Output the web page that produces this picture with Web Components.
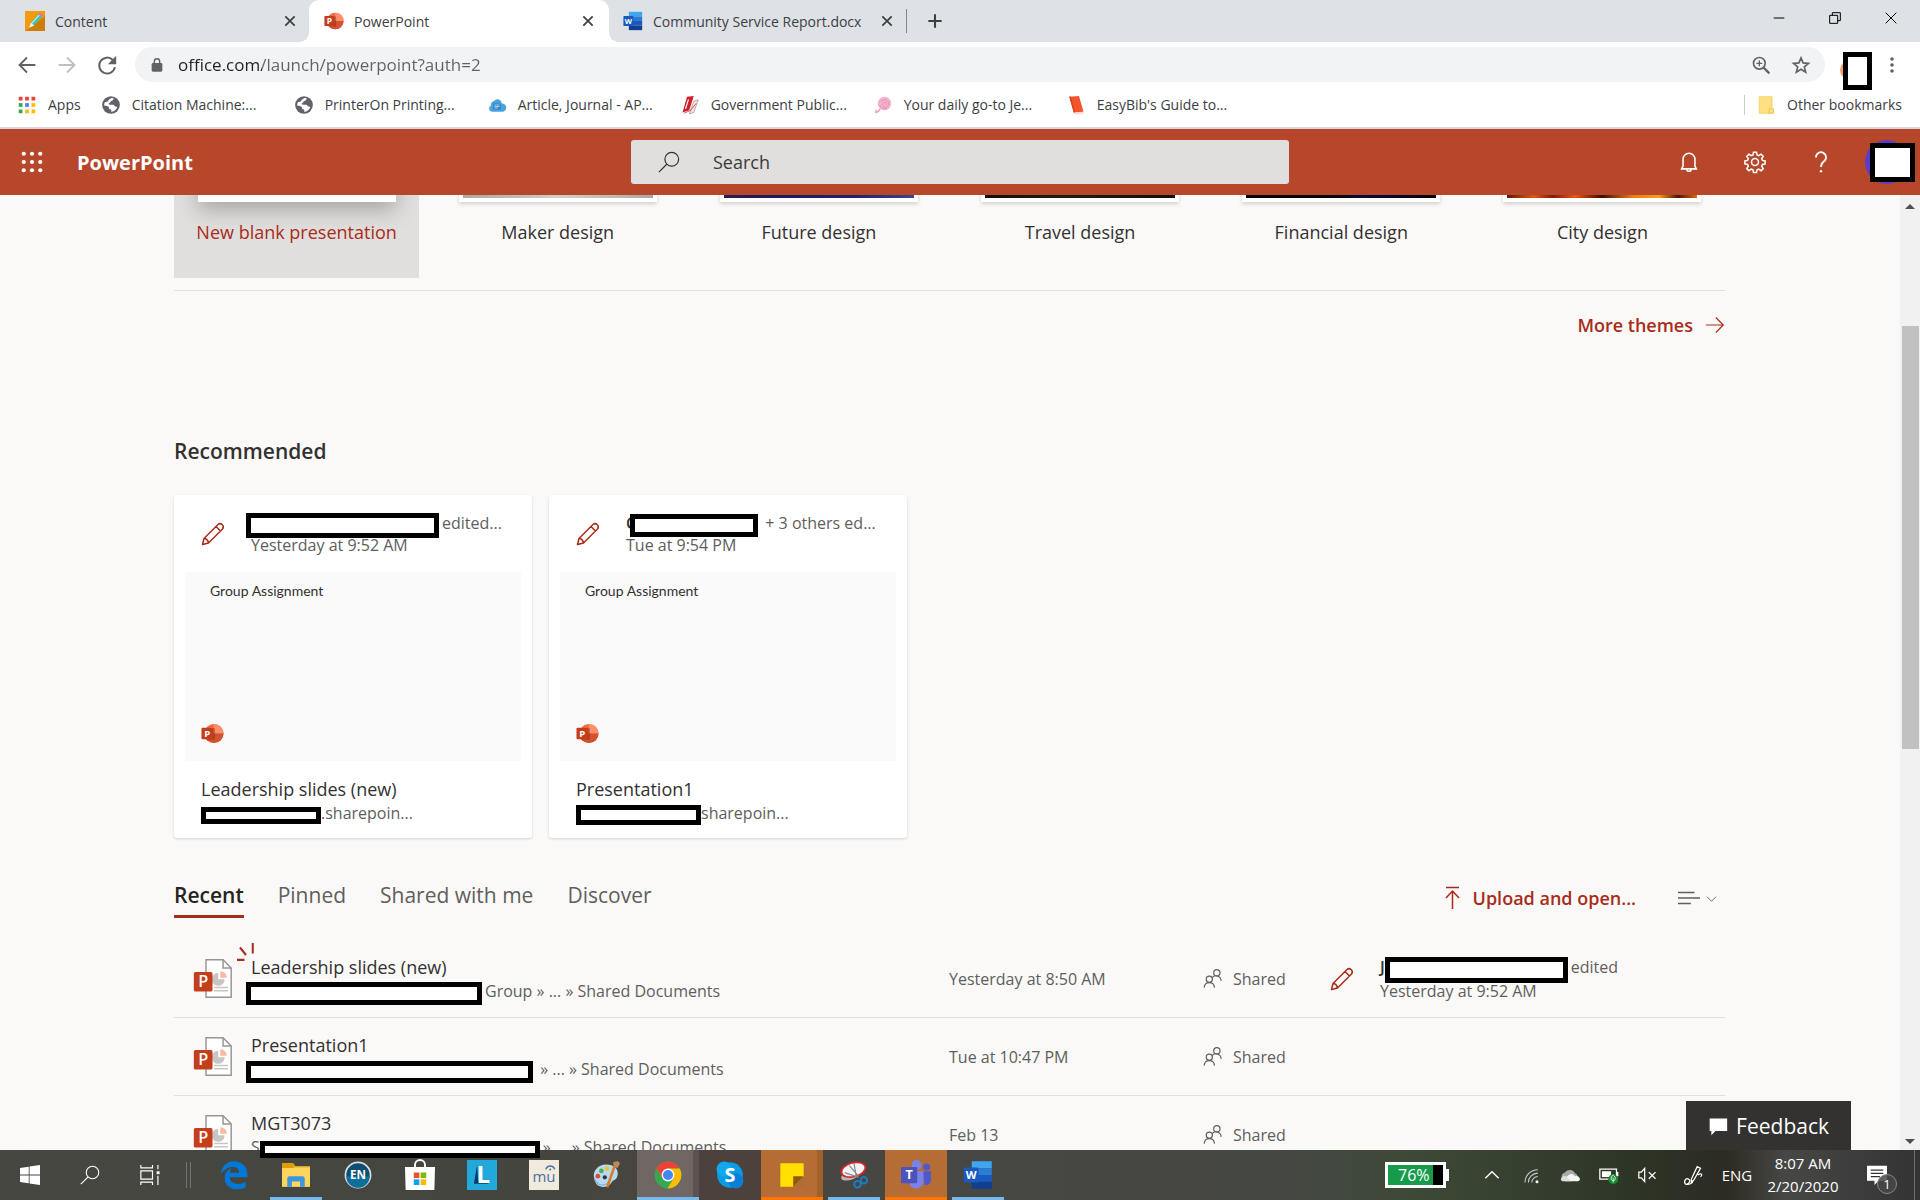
<!DOCTYPE html>
<html lang="en">
<head>
<meta charset="utf-8">
<title>PowerPoint</title>
<style>
  html, body { height: 100%; }
  body {
    margin: 0;
    overflow: hidden;
    font-family: "Open Sans", "Noto Sans", sans-serif;
    color: #323130;
    --brand: #b7472a;
    --accent: #a92b1a;
    --line: #e1dfdd;
    --muted: #605e5c;
    --page: #faf9f8;
  }
</style>
</head>
<body>
<app-window>
  <tab-strip slot="tabs">
    <browser-tab icon="pencil-app">Content</browser-tab>
    <browser-tab icon="powerpoint" active>PowerPoint</browser-tab>
    <browser-tab icon="word">Community Service Report.docx</browser-tab>
  </tab-strip>
  <address-bar slot="toolbar"></address-bar>
  <bookmark-bar slot="bookmarks">
    <bookmark-link icon="apps" compact>Apps</bookmark-link>
    <bookmark-link icon="globe">Citation Machine:...</bookmark-link>
    <bookmark-link icon="globe">PrinterOn Printing...</bookmark-link>
    <bookmark-link icon="cloud-blue">Article, Journal - AP...</bookmark-link>
    <bookmark-link icon="red-book">Government Public...</bookmark-link>
    <bookmark-link icon="rose">Your daily go-to Je...</bookmark-link>
    <bookmark-link icon="easybib">EasyBib's Guide to...</bookmark-link>
    <bookmark-link icon="folder-yellow" slot="other" compact>Other bookmarks</bookmark-link>
  </bookmark-bar>
  <suite-header slot="header">PowerPoint</suite-header>

  <theme-gallery slot="page">
    <theme-tile selected>New blank presentation</theme-tile>
    <theme-tile art="linear-gradient(90deg,#aaa9a5,#bfbdb8 30%,#d0cfcb 50%,#bcbab5 80%,#a9a8a4)">Maker design</theme-tile>
    <theme-tile art="linear-gradient(90deg,#2a1a55,#1c1c60 30%,#1f2468 70%,#39458c)">Future design</theme-tile>
    <theme-tile art="linear-gradient(90deg,#0c1209,#1a1e12 40%,#0d110a)">Travel design</theme-tile>
    <theme-tile art="linear-gradient(90deg,#030306 45%,#080b3c 60%,#06082c 80%,#030306)">Financial design</theme-tile>
    <theme-tile art="linear-gradient(90deg,#5a1c04,#e2580c 14%,#8a1804 24%,#f2540c 36%,#3a0c04 50%,#f07a10 66%,#ff9a1c 80%,#4a1602 90%,#e06a10)">City design</theme-tile>
  </theme-gallery>

  <recommended-list slot="page">
    <file-card heading="Leadership slides (new)">
      <activity-line slot="who"><cover-box w="193" h="25" lead></cover-box>edited...</activity-line>
      <span slot="when">Yesterday at 9:52 AM</span>
      <activity-line slot="where"><cover-box w="120" h="17"></cover-box>.sharepoin...</activity-line>
    </file-card>
    <file-card heading="Presentation1">
      <activity-line slot="who"><b>C</b><cover-box w="128" h="23" tuck></cover-box>&nbsp;+ 3 others ed...</activity-line>
      <span slot="when">Tue at 9:54 PM</span>
      <activity-line slot="where"><cover-box w="125" h="20"></cover-box>sharepoin...</activity-line>
    </file-card>
  </recommended-list>

  <recent-files slot="page"></recent-files>
  <page-scrollbar slot="scroll"></page-scrollbar>
  <feedback-button slot="feedback">Feedback</feedback-button>
  <task-bar slot="taskbar"></task-bar>
</app-window>

<script>
const PPT_MARK = `
  <circle cx="13.5" cy="12" r="10" fill="#ed6c47"/>
  <path d="M13.5 2a10 10 0 0 1 10 10h-10z" fill="#ff8f6b"/>
  <path d="M3.5 12h20a10 10 0 0 1-20 0z" fill="#d35230"/>
  <path d="M5 6.500h9.500v12H5z" fill="#7d2a14" opacity=".45"/>
  <rect x="0.500" y="6" width="12" height="12" rx="1" fill="#c43e1c"/>
  <text x="6.500" y="15.500" font-size="10" font-weight="700" text-anchor="middle" fill="#fff">P</text>`;

const WORD_MARK = `
  <path d="M7 1h16v5.500H7z" fill="#41a5ee"/><path d="M7 6.500h16V12H7z" fill="#2b7cd3"/>
  <path d="M7 12h16v5.500H7z" fill="#185abd"/><path d="M7 17.500h16V23H7z" fill="#103f91"/>
  <rect x="0.500" y="6" width="12" height="12" rx="1" fill="#185abd"/>
  <text x="6.500" y="15.500" font-size="9" font-weight="700" text-anchor="middle" fill="#fff">W</text>`;

// every glyph is drawn in a 24 x 24 box
const ICONS = {
  powerpoint: PPT_MARK,
  word: WORD_MARK,
  "pencil-app": `<path d="M0 0h24v24H0z" fill="#f39a0f"/><path d="M24 6v18H0l5-3z" fill="#cf7d06"/>
    <path d="M5 20l2-6L16.500 3.500l4 3.500L11 17.500z" fill="#3fc1b8"/><path d="M7.500 15.500L17 5" stroke="#b9f0ea" stroke-width="1.500"/>
    <path d="M16.500 3.500l4 3.500 1-2-3.500-3z" fill="#d472c4"/><path d="M5 20l2-6 4 3.500z" fill="#fff3da"/>`,
  close: `<path d="M4 4l16 16M20 4L4 20" stroke="currentColor" stroke-width="3" fill="none"/>`,
  plus: `<path d="M12 4v16M4 12h16" stroke="currentColor" stroke-width="2.500" fill="none"/>`,
  minimize: `<path d="M4 12h16" stroke="currentColor" stroke-width="1.500"/>`,
  restore: `<path d="M4 8h12v12H4zM8 8V4h12v12h-4" stroke="currentColor" stroke-width="1.500" fill="none"/>`,
  shut: `<path d="M4 4l16 16M20 4L4 20" stroke="currentColor" stroke-width="1.500"/>`,
  back: `<path d="M22 12H3M12 3l-9 9 9 9" stroke="currentColor" stroke-width="2.200" fill="none"/>`,
  forward: `<path d="M2 12h19M12 3l9 9-9 9" stroke="currentColor" stroke-width="2.200" fill="none"/>`,
  reload: `<path d="M19 6A9.500 9.500 0 1 0 21.500 14.500" stroke="currentColor" stroke-width="2.400" fill="none"/><path d="M23 1v10H13z" fill="currentColor"/>`,
  lock: `<rect x="4" y="9" width="16" height="13" rx="2" fill="currentColor"/><path d="M8 10V6.500a4 4 0 0 1 8 0V10" stroke="currentColor" stroke-width="2.200" fill="none"/>`,
  zoom: `<circle cx="10" cy="10" r="7" stroke="currentColor" stroke-width="2" fill="none"/><path d="M15 15l7 7" stroke="currentColor" stroke-width="2.800"/><path d="M10 6.500v7M6.500 10h7" stroke="currentColor" stroke-width="1.600"/>`,
  star: `<path d="M12 3.500l2.500 6 6.500.5-5 4.300 1.600 6.400L12 17.200l-5.600 3.500L8 14.300 3 10l6.500-.5z" stroke="currentColor" stroke-width="2" fill="none"/>`,
  kebab: `<circle cx="12" cy="4" r="2.400"/><circle cx="12" cy="12" r="2.400"/><circle cx="12" cy="20" r="2.400"/>`,
  apps: `<path d="M1 1h5v5H1zM9.500 1h5v5h-5zM18 1h5v5h-5z" fill="#ea4335"/><path d="M1 9.500h5v5H1z" fill="#34a853"/><path d="M9.500 9.500h5v5h-5z" fill="#4285f4"/><path d="M18 9.500h5v5h-5z" fill="#fbbc05"/><path d="M1 18h5v5H1z" fill="#34a853"/><path d="M9.500 18h5v5h-5zM18 18h5v5h-5z" fill="#fbbc05"/>`,
  globe: `<circle cx="12" cy="12" r="11.800" fill="#5f6368"/><path d="M15 2.800c1 2-.5 3.500-2.500 4-1.500.3-1 2-2.500 2.500-2 .7-1 2.200 1 2.200h4c2 0 1.500 2.500 3 2.500l2.500.5C19 18.500 16 21 12 21c1-1.500.5-3-1-3.200-2-.3-1.500-2-2-3.300-.5-1-4-1.500-6-1.500C2.500 7 7.500 2 15 2.800z" fill="#fff"/><path d="M3 8c2-4 6-6 9-5.500-1 2-3 1.500-3.500 3.500S6 8 3 8z" fill="#5f6368"/>`,
  "cloud-blue": `<path d="M5 21a4.500 4.500 0 0 1-1-8.500 5 5 0 0 1 4-6 6 6 0 0 1 10.500 3.500A5.500 5.500 0 0 1 19 21z" fill="#4ba3dc"/><path d="M7 10h10v8H7z" fill="#2d7fc0"/><path d="M8.500 12h7M8.500 14h7M8.500 16h5" stroke="#cfe8f8"/>`,
  "red-book": `<path d="M8 1l9-1-6 19-9 3z" fill="#cf1f2c"/><path d="M17 7l6-2-6 17-6 2z" fill="#efe7e4" stroke="#b78f8c"/><path d="M10 4.500L6 17" stroke="#fff" stroke-width="1.500"/><path d="M4 23l9-4 7-9" stroke="#c2303a" fill="none"/>`,
  rose: `<circle cx="14" cy="10" r="9" fill="#f3b4cd"/><path d="M9 8c2-4 8-4 10 0s-2 8-5 7-4-4-1-6 5 1 3 3M8 12c0 4 5 6 9 5" stroke="#e58fb3" fill="none" stroke-width="1.300"/><path d="M1 22c3 0 6-2 7-5" stroke="#ee9fbf" stroke-width="2" fill="none"/><circle cx="3" cy="20" r="2" fill="#f3b4cd"/>`,
  easybib: `<path d="M3 1l13-1 6 21-13 1z" fill="#f0552b"/><path d="M9 22l13-1v3l-12 .500z" fill="#ffd9cc"/><path d="M3 1l2-.200L11 22l-2 0z" fill="#d9431c"/>`,
  "folder-yellow": `<path d="M3 1h17v22H3z" fill="#ffe082" stroke="#f1cb56"/><path d="M16 17h6v6h-6z" fill="#ffe082" stroke="#e7b93b"/>`,
  waffle: `<g fill="currentColor"><circle cx="3" cy="3" r="2.300"/><circle cx="12" cy="3" r="2.300"/><circle cx="21" cy="3" r="2.300"/><circle cx="3" cy="12" r="2.300"/><circle cx="12" cy="12" r="2.300"/><circle cx="21" cy="12" r="2.300"/><circle cx="3" cy="21" r="2.300"/><circle cx="12" cy="21" r="2.300"/><circle cx="21" cy="21" r="2.300"/></g>`,
  search: `<circle cx="15" cy="9" r="7.500" stroke="currentColor" stroke-width="1.300" fill="none"/><path d="M9.500 14.500L1 23" stroke="currentColor" stroke-width="1.300"/>`,
  bell: `<path d="M4 19.500h16l-1.500-3V9a6.500 6.500 0 0 0-13 0v7.500zM9.500 19.500a2.500 2.500 0 0 0 5 0" stroke="currentColor" stroke-width="1.700" fill="none"/>`,
  gear: `<circle cx="12" cy="12" r="3.800" stroke="currentColor" stroke-width="1.700" fill="none"/><path d="M10.300 1.200h3.400l.6 3 1.900.8 2.600-1.700 2.400 2.400-1.700 2.600.8 1.900 3 .6v3.400l-3 .6-.8 1.900 1.700 2.600-2.400 2.400-2.600-1.700-1.900.8-.6 3h-3.400l-.6-3-1.900-.8-2.600 1.700-2.400-2.400 1.700-2.600-.8-1.900-3-.6v-3.400l3-.6.8-1.900-1.700-2.600 2.400-2.400 2.600 1.700 1.900-.8z" transform="translate(.3 .3) scale(.975)" stroke="currentColor" stroke-width="1.700" fill="none"/>`,
  help: `<path d="M6.500 7a5.500 5.500 0 1 1 8.500 4.500c-2 1.500-3 2.500-3 6" stroke="currentColor" stroke-width="1.900" fill="none"/><circle cx="12" cy="22" r="1.300" fill="currentColor"/>`,
  pencil: `<path d="M1.500 22.500L3 16.500 17 2.500a3.200 3.200 0 0 1 4.500 4.500L7.500 21zM3 16.500c2 0 4 2 4.500 4.500M15 4.500l4.500 4.500" stroke="currentColor" stroke-width="1.500" fill="none" stroke-linejoin="round"/>`,
  "arrow-right": `<path d="M1 12h21M13 3l9 9-9 9" stroke="currentColor" stroke-width="1.400" fill="none"/>`,
  upload: `<path d="M6 1.500h13M12.500 23V5.500M6 12l6.500-7L19 12" stroke="currentColor" stroke-width="1.500" fill="none"/>`,
  lines: `<path d="M0 6h18M0 12h24M0 18h14" stroke="currentColor" stroke-width="1.500"/>`,
  chevron: `<path d="M2 8l10 10L22 8" stroke="currentColor" stroke-width="2" fill="none"/>`,
  people: `<circle cx="17.500" cy="4.700" r="4"/><circle cx="8" cy="13" r="3.900"/><path d="M1.500 23.500c.5-8.500 12.500-8.500 13 0M11.500 11c3-4.500 11-2.500 11.500 4"/>`,
  file: `<path d="M8 .500h10.500l5 5V23.500H8z" fill="#fff" stroke="#979593" stroke-width=".9"/><path d="M18.500.500v5h5" fill="none" stroke="#979593" stroke-width=".9"/>
    <path d="M15.500 8.500v4h4a4 4 0 1 1-4-4z" fill="#c8c6c4"/><path d="M16.800 7.500a4 4 0 0 1 4 4h-4z" fill="#f8b9a2"/>
    <path d="M13 17.500h8.500M13 19.500h8.500" stroke="#c8c6c4"/>
    <rect x="0.500" y="8" width="11.500" height="12" rx="1" fill="#c43e1c"/>
    <text x="6.300" y="17.500" font-size="10" font-weight="600" text-anchor="middle" fill="#fff">P</text>`,
  spark: `<path d="M0 22.500h10M4 6l8 10M21 0v14" stroke="currentColor" stroke-width="2.700" fill="none"/>`,
  comment: `<path d="M2 3h21v15H9l-5 5v-5H2z" fill="currentColor"/>`,
  windows: `<path d="M0 3.500l10.500-1.500v9.500H0zM11.500 1.900L24 0v11.500H11.500zM0 12.500h10.500V22L0 20.500zM11.500 12.500H24V24l-12.500-1.900z" fill="currentColor"/>`,
  taskview: `<path d="M1 7h14v10H1zM1 0v3.500h14V0M1 24v-3.500h14V24M21.500 0v5M21.500 13v11" stroke="currentColor" stroke-width="1.400" fill="none"/><path d="M20 7.500h3.500V11H20z" fill="currentColor"/>`,
  edge: `<path d="M.500 11.200C1.500 4 6.500.200 12 .200c7 0 11.500 5 11.500 11.500V14H8.300c.5 6.500 8.500 7 13.700 3.800v5c-8 3.500-18 .7-18-8.300 0-4.500 2.500-7 6-8.500-1 1.200-1.500 2.500-1.700 4h8c0-7-10.500-6-15.800 1.200z" fill="#0078d7"/>`,
  explorer: `<path d="M0 2h9.500l2 2.500H24V22H0z" fill="#f8c33b"/><path d="M0 2h9.500l2 2.500L9.500 6H0z" fill="#e09d00"/><path d="M0 6h24v16H0z" fill="#ffd55e"/><path d="M4.500 22v-7a2 2 0 0 1 2-2h11a2 2 0 0 1 2 2v7h-4v-4.500h-7V22z" fill="#3c96dd"/>`,
  endnote: `<circle cx="12" cy="12" r="11.500" fill="#d8dde0"/><circle cx="12" cy="12" r="10" fill="#0f4e73"/><path d="M2 13a10 10 0 0 0 20 0z" fill="#0d6f9a"/><text x="12" y="15.300" font-size="10" font-weight="700" text-anchor="middle" fill="#fff">EN</text>`,
  store: `<path d="M8 6V4a4 4 0 0 1 8 0v2" stroke="#fff" stroke-width="1.500" fill="none"/><path d="M0 5.500h24L23.500 24H.500z" fill="#fff"/><path d="M7 10h4.500v4.500H7z" fill="#f25022"/><path d="M12.500 10H17v4.500h-4.500z" fill="#7fba00"/><path d="M7 15.500h4.500V20H7z" fill="#00a4ef"/><path d="M12.500 15.500H17V20h-4.500z" fill="#ffb900"/>`,
  lapp: `<path d="M0 0h24v24H0z" fill="#22a9dc"/><path d="M8 4L5.500 19H18l-9-2z" fill="#0b3a66"/><text x="13" y="18" font-size="19" font-weight="700" text-anchor="middle" fill="#fff">L</text>`,
  mendeley: `<path d="M0 0h24v24H0z" fill="#f1ebde"/><text x="12" y="17.500" font-size="12" text-anchor="middle" fill="#4a6fa5">mu</text><path d="M13.500 7.500c1-3.500 6-3.500 7 0" stroke="#4a6fa5" stroke-width="1.200" fill="none"/><circle cx="17" cy="7.500" r=".8" fill="#4a6fa5"/>`,
  paint: `<path d="M2 15C0 9 5 3 12 3s11 4 10 9-4 4-5 6-4 5-9 4-5-4-6-7z" fill="#b5d9ee"/><path d="M2 15c1 4 5 7 10 5l4-4" fill="none" stroke="#7fb3d3"/><circle cx="5" cy="13" r="2" fill="#e2473d"/><circle cx="8" cy="8.500" r="2" fill="#4bb04b"/><circle cx="13" cy="6.500" r="2" fill="#f0c43a"/><circle cx="11" cy="14" r="1.800" fill="#2f3136"/><path d="M21 3l-7 20-2-1L19 2z" fill="#d9792b"/><path d="M18 1l4-1 2 2-2 4-3-1z" fill="#b98a55"/>`,
  chrome: `<circle cx="12" cy="12" r="11.500" fill="#34a853"/><path d="M2 6.200A11.500 11.500 0 0 1 22 6.500H12L7.200 14.800z" fill="#ea4335"/><path d="M22 6.500A11.500 11.500 0 0 1 11.500 23.500L16.800 14.800 12 6.500z" fill="#fbbc05" /><circle cx="12" cy="12" r="5.500" fill="#fff"/><circle cx="12" cy="12" r="4.300" fill="#4285f4"/>`,
  skype: `<circle cx="12" cy="12" r="11" fill="#0a9be6"/><circle cx="7" cy="7" r="6.500" fill="#10a8ee"/><circle cx="17" cy="17" r="6.500" fill="#0b7fd6"/><text x="12" y="18" font-size="17" font-weight="700" text-anchor="middle" fill="#fff">S</text>`,
  sticky: `<path d="M2 2h20v11l-9 9H2z" fill="#ffe000"/><path d="M22 13v9h-9z" fill="#b36b35"/><path d="M13 22v-9h9z" fill="#8d5a12"/>`,
  snip: `<ellipse cx="9" cy="12" rx="8.500" ry="4" transform="rotate(-20 9 12)" fill="#b6babd"/><ellipse cx="11.500" cy="7.500" rx="10.500" ry="6" transform="rotate(-15 11.500 7.500)" fill="#f4f4f4" stroke="#d8262c" stroke-width="1.500"/><path d="M12 2l2 12M4 10l12 4M8 4l8 9" stroke="#85898c"/><circle cx="15" cy="20" r="2.800" fill="none" stroke="#1d7bc0" stroke-width="1.700"/><circle cx="20.500" cy="16.500" r="2.800" fill="none" stroke="#1d7bc0" stroke-width="1.700"/>`,
  teams: `<circle cx="20.500" cy="5.500" r="2.800" fill="#5059c9"/><path d="M17 9h7v7a4 4 0 0 1-5 4z" fill="#5059c9"/><circle cx="12.500" cy="4" r="4" fill="#7b83eb"/><path d="M7 9h11v8a6 6 0 0 1-11 3z" fill="#7b83eb"/><rect y="5.500" width="13" height="13" rx="1" fill="#4b53bc"/><text x="6.500" y="15.500" font-size="10" font-weight="700" text-anchor="middle" fill="#fff">T</text>`,
  up: `<path d="M2 17L12 7l10 10" stroke="currentColor" stroke-width="2" fill="none"/>`,
  wifi: `<g fill="none" stroke="currentColor" stroke-width="1.400"><path d="M13 22a8 8 0 0 1 8-8M8.500 22A12.500 12.500 0 0 1 21 9.500M4 22A17 17 0 0 1 21 5" opacity=".75"/></g><circle cx="20" cy="21" r="2" fill="currentColor"/>`,
  onedrive: `<path d="M4 18a5 5 0 0 1 2-9 7 7 0 0 1 12 1 5 5 0 0 1 2 8z" fill="#a9aba6"/><path d="M6 19.500a4 4 0 0 1 3-6c3-4 7-3 9 0 4-1 6 2 6 4a3 3 0 0 1-3 2z" fill="#f5f5f5"/><path d="M1 18c0-3 2-5 5-5l8 6.500H3z" fill="#dededc"/>`,
  charge: `<path d="M1 5h20v12H1zM22.500 8.500v5" fill="none" stroke="currentColor" stroke-width="1.500"/><path d="M3.500 7.500h11v7h-11z" fill="currentColor"/><circle cx="17" cy="17" r="6" fill="#128a2d"/><path d="M17 21v-6M14.500 16.500c0-3 2.500-4.500 2.500-4.500s2.500 1.500 2.500 4.500-5 3-5 0z" stroke="#fff" fill="none"/>`,
  mute: `<path d="M1 8.500h3L8 4v16l-4-4.500H1zM13 8.500l8 8M21 8.500l-8 8" stroke="currentColor" stroke-width="1.500" fill="none"/>`,
  pen: `<path d="M10 17L17 2l4 2-8 14-3 2zM3 23c-3-4 1-8 4-6s-1 7-4 6c4 1 9-1 9-4M18 12c4-3 6 0 3 2" stroke="currentColor" stroke-width="1.500" fill="none"/>`,
  notice: `<path d="M0 1h24v18h-10l-5 5v-5H0z" fill="currentColor"/><path d="M4.500 6h15M4.500 10h15M4.500 14h11" stroke="#333" stroke-width="1.500"/>`,
};

class UiIcon extends HTMLElement {
  constructor() {
    super();
    this.attachShadow({ mode: "open" });
  }

  connectedCallback() {
    const size = this.getAttribute("size") || "20";
    this.shadowRoot.innerHTML = `
      <style>
        :host { display: inline-flex; flex: none; width: ${size}px; height: ${size}px; }
        svg { width: 100%; height: 100%; overflow: visible; font-family: "Open Sans", sans-serif; }
        .people { fill: none; stroke: currentColor; stroke-width: 1.5px; }
      </style>
      <svg viewBox="0 0 24 24" fill="currentColor" class="${this.getAttribute("name")}" aria-hidden="true">${ICONS[this.getAttribute("name")]}</svg>
    `;
  }
}
customElements.define("ui-icon", UiIcon);

// Base for the parts whose markup never changes
class StaticPart extends HTMLElement {
  constructor() {
    super();
    this.attachShadow({ mode: "open" });
  }

  connectedCallback() {
    this.shadowRoot.innerHTML = `
      <style>
        *, *::before { box-sizing: border-box; }
        button { font: inherit; color: inherit; background: none; border: 0; padding: 0; margin: 0; cursor: pointer; }
        a { color: inherit; text-decoration: none; }
        ${this.styles()}
      </style>
      ${this.markup()}
    `;
  }
}

class AppWindow extends StaticPart {
  styles() {
    return `
      :host { display: flex; flex-direction: column; height: 100vh; background: var(--page); }
      .chrome, .head, .bottom { position: relative; z-index: 1; flex: none; }
      .chrome { z-index: 2; }
      .body { flex: 1; min-height: 0; display: flex; }
      main { flex: 1; min-width: 0; padding: 0 175px 0 174px; background: var(--page); }
      .bar { flex: none; display: flex; }
      .float { position: absolute; right: 69px; bottom: 100%; }
    `;
  }
  markup() {
    return `
      <div class="chrome"><slot name="tabs"></slot><slot name="toolbar"></slot><slot name="bookmarks"></slot></div>
      <div class="head"><slot name="header"></slot></div>
      <div class="body"><main><slot name="page"></slot></main><div class="bar"><slot name="scroll"></slot></div></div>
      <div class="bottom"><div class="float"><slot name="feedback"></slot></div><slot name="taskbar"></slot></div>
    `;
  }
}
customElements.define("app-window", AppWindow);

class TabStrip extends StaticPart {
  styles() {
    return `
      :host { display: flex; align-items: center; height: 42px; background: #dee1e6; color: #3c4043; }
      .add { display: flex; margin-left: 18px; }
      .controls { display: flex; gap: 40px; margin-left: auto; padding: 0 21px 6px 0; color: #000; }
      .controls button { display: flex; }
    `;
  }
  markup() {
    return `
      <slot></slot>
      <button class="add" aria-label="New tab"><ui-icon name="plus" size="20"></ui-icon></button>
      <div class="controls">
        <button aria-label="Minimize"><ui-icon name="minimize" size="16"></ui-icon></button>
        <button aria-label="Restore"><ui-icon name="restore" size="16"></ui-icon></button>
        <button aria-label="Close"><ui-icon name="shut" size="16"></ui-icon></button>
      </div>
    `;
  }
}
customElements.define("tab-strip", TabStrip);

class BrowserTab extends StaticPart {
  styles() {
    return `
      :host { display: flex; align-items: center; gap: 10px; width: 300px; height: 42px; box-sizing: border-box; padding: 0 14px 0 15px; font-size: 14px; }
      :host(:first-child) { width: 309px; padding: 0 12px 0 25px; }
      :host(:nth-child(3)) { width: 298px; background: linear-gradient(#80868b, #80868b) right center / 1px 24px no-repeat; padding-right: 13px; padding-left: 14px; }
      :host([active]) {
        position: relative; background: #fff; border-radius: 10px 10px 0 0;
      }
      /* the active tab flares out at its foot */
      :host([active])::before, :host([active])::after {
        content: ""; position: absolute; bottom: 0; width: 10px; height: 10px;
      }
      :host([active])::before { right: 100%; background: radial-gradient(circle at 0 0, transparent 10px, #fff 10px); }
      :host([active])::after { left: 100%; background: radial-gradient(circle at 100% 0, transparent 10px, #fff 10px); }
      .label { flex: 1; white-space: nowrap; }
      button { display: flex; }
    `;
  }
  markup() {
    return `
      <ui-icon name="${this.getAttribute("icon")}" size="20"></ui-icon>
      <span class="label"><slot></slot></span>
      <button aria-label="Close tab"><ui-icon name="close" size="14"></ui-icon></button>
    `;
  }
}
customElements.define("browser-tab", BrowserTab);

class AddressBar extends StaticPart {
  styles() {
    return `
      :host { display: flex; align-items: center; height: 45px; background: #fff; color: #5f6368; padding: 0 19px 0 17px; }
      button { display: flex; }
      .nav { display: flex; gap: 20px; padding-right: 18px; }
      .off { color: #bdc1c6; }
      .omni { flex: 1; display: flex; align-items: center; height: 35px; border-radius: 18px; background: #f1f3f4; padding: 0 14px; }
      .omni button { margin-left: 20px; }
      input {
        flex: 1; border: 0; outline: 0; margin: 0 0 0 13px; padding: 0; font: 17px/24px "Open Sans", sans-serif;
        color: transparent; background: linear-gradient(90deg, #202124 84px, #5f6368 84px);
        -webkit-background-clip: text; background-clip: text;
      }
      .user { position: relative; top: 6px; margin: 0 11px 0 18px; width: 29px; height: 38px; }
      .user::before { content: ""; position: absolute; left: -3px; top: 8px; width: 20px; height: 20px; border-radius: 50%; background: #f3a06c; }
    `;
  }
  markup() {
    return `
      <div class="nav">
        <button aria-label="Back"><ui-icon name="back"></ui-icon></button>
        <button aria-label="Forward" class="off"><ui-icon name="forward"></ui-icon></button>
        <button aria-label="Reload"><ui-icon name="reload"></ui-icon></button>
      </div>
      <div class="omni">
        <ui-icon name="lock" size="16"></ui-icon>
        <input type="text" value="office.com/launch/powerpoint?auth=2" aria-label="Address">
        <button aria-label="Zoom"><ui-icon name="zoom"></ui-icon></button>
        <button aria-label="Bookmark this page"><ui-icon name="star"></ui-icon></button>
      </div>
      <div class="user"><cover-box w="29" h="38"></cover-box></div>
      <button aria-label="Menu"><ui-icon name="kebab" size="18"></ui-icon></button>
    `;
  }
}
customElements.define("address-bar", AddressBar);

class BookmarkBar extends StaticPart {
  styles() {
    return `
      :host { display: flex; align-items: center; height: 42px; box-sizing: border-box; padding: 0 18px 4px; background: #fff; border-bottom: 2px solid #d5d8dc; color: #3c4043; }
      nav { display: flex; flex: 1; }
      .other { border-left: 1px solid #c8cbcf; padding-left: 12px; }
    `;
  }
  markup() {
    return `<nav><slot></slot></nav><div class="other"><slot name="other"></slot></div>`;
  }
}
customElements.define("bookmark-bar", BookmarkBar);

class BookmarkLink extends StaticPart {
  styles() {
    return `
      :host { display: block; width: 193px; font-size: 14px; line-height: 20px; }
      :host([compact]) { width: auto; margin-right: 21px; }
      :host([slot="other"]) { margin-right: 0; }
      a { display: flex; align-items: center; gap: 12px; white-space: nowrap; }
    `;
  }
  markup() {
    return `<a href="#"><ui-icon name="${this.getAttribute("icon")}" size="18"></ui-icon><slot></slot></a>`;
  }
}
customElements.define("bookmark-link", BookmarkLink);

class SuiteHeader extends StaticPart {
  styles() {
    return `
      :host { display: grid; grid-template-columns: 1fr minmax(320px, 658px) 1fr; align-items: center; height: 66px; background: var(--brand); color: #fff; }
      .left { display: flex; align-items: center; gap: 34px; padding-left: 21px; font-size: 20px; font-weight: 700; }
      button { display: flex; }
      label { display: flex; align-items: center; gap: 33px; height: 44px; padding: 0 27px; border-radius: 3px; background: #e1dfdd; color: #323130; }
      input { flex: 1; min-width: 0; border: 0; outline: 0; padding: 0; background: none; font: 18px/24px "Open Sans", sans-serif; color: #323130; }
      input::placeholder { color: #3b3a39; opacity: 1; }
      .right { display: flex; align-items: center; justify-content: flex-end; gap: 44px; padding-right: 5px; }
      .me { position: relative; width: 45px; height: 44px; display: flex; align-items: center; margin-left: -6px; }
      .me::before { content: ""; position: absolute; left: -5px; width: 44px; height: 44px; border-radius: 50%; background: #5b3cc4; }
    `;
  }
  markup() {
    return `
      <div class="left">
        <button aria-label="App launcher"><ui-icon name="waffle" size="22"></ui-icon></button>
        <slot></slot>
      </div>
      <label><ui-icon name="search" size="22"></ui-icon><input type="search" placeholder="Search" aria-label="Search"></label>
      <div class="right">
        <button aria-label="Notifications"><ui-icon name="bell" size="22"></ui-icon></button>
        <button aria-label="Settings"><ui-icon name="gear" size="22"></ui-icon></button>
        <button aria-label="Help"><ui-icon name="help" size="22"></ui-icon></button>
        <div class="me"><cover-box w="45" h="39"></cover-box></div>
      </div>
    `;
  }
}
customElements.define("suite-header", SuiteHeader);

// White box with a heavy frame that hides a name
class CoverBox extends StaticPart {
  styles() {
    return `
      :host {
        display: inline-block; position: relative; z-index: 2; flex: none; box-sizing: border-box;
        width: ${this.getAttribute("w")}px; height: ${this.getAttribute("h")}px;
        background: #fff; border: 5px solid #000;
      }
      :host([lead]) { margin-left: -5px; }
      :host([tuck]) { margin-left: -6px; }
    `;
  }
  markup() {
    return "";
  }
}
customElements.define("cover-box", CoverBox);

class ActivityLine extends StaticPart {
  styles() {
    return `
      :host { display: flex; align-items: center; height: 24px; white-space: nowrap; }
      :host([slot]) { height: 22px; }
      ::slotted(b) { font-weight: 600; color: #323130; }
      ::slotted(cover-box) { margin-right: 3px; top: 3px; }
      :host([slot]) ::slotted(cover-box) { top: 2px; }
      :host([slot="where"]) ::slotted(cover-box) { margin-right: 0; }
    `;
  }
  markup() {
    return `<slot></slot>`;
  }
}
customElements.define("activity-line", ActivityLine);

class ThemeGallery extends StaticPart {
  styles() {
    return `
      :host { display: block; margin-top: -104px; }
      .tiles { display: grid; grid-template-columns: repeat(6, 1fr); gap: 16px; padding-bottom: 12px; border-bottom: 1px solid var(--line); }
      .more { display: flex; justify-content: flex-end; margin-top: 21px; font-size: 18px; line-height: 26px; font-weight: 600; color: var(--accent); }
      a { display: flex; align-items: center; gap: 12px; }
    `;
  }
  markup() {
    return `
      <div class="tiles"><slot></slot></div>
      <div class="more"><a href="#">More themes <ui-icon name="arrow-right"></ui-icon></a></div>
    `;
  }
}
customElements.define("theme-gallery", ThemeGallery);

class ThemeTile extends StaticPart {
  styles() {
    return `
      :host { display: block; font-size: 18px; line-height: 26px; }
      :host([selected]) { background: var(--line); color: var(--accent); }
      a { display: flex; flex-direction: column; align-items: center; gap: 17px; padding-bottom: 33px; white-space: nowrap; }
      .art { width: 198px; height: 111px; background: ${this.getAttribute("art") || "#fff"}; border: 4px solid #fff; box-shadow: 0 2px 4px rgba(0, 0, 0, .16); }
      :host([selected]) .art { box-shadow: 0 8px 20px rgba(0, 0, 0, .25); }
    `;
  }
  markup() {
    return `<a href="#"><span class="art"></span><slot></slot></a>`;
  }
}
customElements.define("theme-tile", ThemeTile);

class RecommendedList extends StaticPart {
  styles() {
    return `
      :host { display: block; margin-top: 97px; }
      h2 { margin: 0 0 28px; font-size: 21px; line-height: 32px; font-weight: 600; }
      .cards { display: flex; gap: 17px; }
    `;
  }
  markup() {
    return `<h2>Recommended</h2><div class="cards"><slot></slot></div>`;
  }
}
customElements.define("recommended-list", RecommendedList);

class FileCard extends StaticPart {
  styles() {
    return `
      :host { display: block; width: 358px; box-sizing: border-box; padding: 17px 11px 14px; background: #fff; border-radius: 3px; box-shadow: 0 1px 3px rgba(0, 0, 0, .16); font-size: 16px; line-height: 22px; color: var(--muted); }
      .top { display: flex; align-items: center; gap: 26px; padding-left: 16px; }
      .top > ui-icon { color: var(--accent); }
      .top > div { height: 44px; }
      .preview { display: flex; flex-direction: column; justify-content: space-between; align-items: flex-start; height: 189px; margin-top: 16px; padding: 8px 16px 16px; background: #fafafa; color: #323130; }
      .preview span { padding-left: 9px; font: 14px/22px Lato, sans-serif; }
      .info { padding: 16px 16px 0; }
      a { display: block; font-size: 18px; line-height: 25px; color: #323130; }
    `;
  }
  markup() {
    return `
      <div class="top">
        <ui-icon name="pencil" size="24"></ui-icon>
        <div><slot name="who"></slot><slot name="when"></slot></div>
      </div>
      <div class="preview"><span>Group Assignment</span><ui-icon name="powerpoint" size="23"></ui-icon></div>
      <div class="info"><a href="#">${this.getAttribute("heading")}</a><slot name="where"></slot></div>
    `;
  }
}
customElements.define("file-card", FileCard);

const FILES = [
  {
    name: "Leadership slides (new)",
    fresh: true,
    path: `<cover-box w="236" h="23" lead></cover-box>Group » ... » Shared Documents`,
    date: "Yesterday at 8:50 AM",
    who: `<b>J</b><cover-box w="183" h="26"></cover-box>edited`,
    when: "Yesterday at 9:52 AM",
  },
  {
    name: "Presentation1",
    path: `<cover-box w="287" h="22" lead></cover-box>&nbsp;» ... » Shared Documents`,
    date: "Tue at 10:47 PM",
  },
  {
    name: "MGT3073",
    path: `S<cover-box w="280" h="17"></cover-box>» ... » Shared Documents`,
    date: "Feb 13",
  },
];

class RecentFiles extends StaticPart {
  styles() {
    return `
      :host { display: block; margin-top: 41px; font-size: 16px; line-height: 24px; color: var(--muted); }
      .bar { display: flex; align-items: flex-start; }
      .tabs { display: flex; flex: 1; gap: 34px; font-size: 21px; line-height: 32px; }
      .tabs button { padding-bottom: 4px; border-bottom: 3px solid transparent; }
      .tabs [aria-selected=true] { color: #252423; font-weight: 600; border-color: var(--accent); }
      .upload { display: flex; align-items: center; gap: 9px; height: 38px; font-size: 18px; font-weight: 600; color: var(--accent); }
      .view { display: flex; align-items: center; gap: 6px; height: 38px; margin: 0 8px 0 42px; color: #605e5c; }
      table { width: 100%; margin-top: 22px; border-collapse: separate; border-spacing: 0; table-layout: fixed; }
      td { height: 78px; padding: 0; border-bottom: 1px solid var(--line); vertical-align: middle; }
      .c-icon { width: 77px; } .c-date { width: 254px; } .c-share { width: 127px; } .c-act { width: 50px; } .c-who { width: 345px; }
      td:first-child { padding-left: 19px; }
      td ui-icon { vertical-align: middle; }
      .title { position: relative; font-size: 18px; color: #323130; }
      .title ui-icon { position: absolute; left: -14px; top: -12px; color: var(--accent); }
      .share { display: flex; align-items: center; gap: 11px; }
      .edit { color: var(--accent); }
    `;
  }
  row(file) {
    return `
      <tr>
        <td><ui-icon name="file" size="39"></ui-icon></td>
        <td>
          <div class="title">${file.fresh ? `<ui-icon name="spark" size="18"></ui-icon>` : ""}<a href="#">${file.name}</a></div>
          <activity-line>${file.path}</activity-line>
        </td>
        <td>${file.date}</td>
        <td><div class="share"><ui-icon name="people" size="19"></ui-icon>Shared</div></td>
        <td class="edit">${file.who ? `<ui-icon name="pencil" size="24"></ui-icon>` : ""}</td>
        <td>${file.who ? `<activity-line>${file.who}</activity-line><div>${file.when}</div>` : ""}</td>
      </tr>
    `;
  }
  markup() {
    return `
      <div class="bar">
        <div class="tabs" role="tablist">
          <button role="tab" aria-selected="true">Recent</button>
          <button role="tab" aria-selected="false">Pinned</button>
          <button role="tab" aria-selected="false">Shared with me</button>
          <button role="tab" aria-selected="false">Discover</button>
        </div>
        <button class="upload"><ui-icon name="upload" size="24"></ui-icon>Upload and open...</button>
        <button class="view" aria-label="View options"><ui-icon name="lines" size="22"></ui-icon><ui-icon name="chevron" size="11"></ui-icon></button>
      </div>
      <table aria-label="Recent files">
        <colgroup><col class="c-icon"><col><col class="c-date"><col class="c-share"><col class="c-act"><col class="c-who"></colgroup>
        <tbody>${FILES.map((file) => this.row(file)).join("")}</tbody>
      </table>
    `;
  }
}
customElements.define("recent-files", RecentFiles);

class PageScrollbar extends StaticPart {
  styles() {
    return `
      :host { display: flex; flex-direction: column; align-items: center; width: 20px; box-sizing: border-box; padding: 9px 0 6px; background: #f1f1f1; }
      .up, .down { border: 5px solid transparent; }
      .up { border-top: 0; border-bottom-color: #505050; }
      .down { border-bottom: 0; border-top-color: #505050; }
      .track { flex: 1; display: flex; flex-direction: column; align-items: stretch; width: 17px; padding-top: 117px; }
      .thumb { height: 52%; min-height: 40px; background: #c1c1c1; }
    `;
  }
  markup() {
    return `<span class="up"></span><div class="track"><div class="thumb"></div></div><span class="down"></span>`;
  }
}
customElements.define("page-scrollbar", PageScrollbar);

class FeedbackButton extends StaticPart {
  styles() {
    return `
      :host { display: block; }
      button { display: flex; align-items: center; gap: 8px; height: 49px; padding: 0 22px; background: #333230; color: #fff; font-size: 21px; line-height: 32px; }
    `;
  }
  markup() {
    return `<button><ui-icon name="comment" size="20"></ui-icon><slot></slot></button>`;
  }
}
customElements.define("feedback-button", FeedbackButton);

const TASKS = [
  { icon: "edge" },
  { icon: "explorer", state: "open" },
  { icon: "endnote" },
  { icon: "store", size: 30 },
  { icon: "lapp", size: 30 },
  { icon: "mendeley", size: 30 },
  { icon: "paint" },
  { icon: "chrome", state: "current" },
  { icon: "skype", state: "tint" },
  { icon: "sticky", state: "alert stack" },
  { icon: "snip", state: "open" },
  { icon: "teams", state: "alert", size: 30 },
  { icon: "word", state: "open", size: 30 },
];

class TaskBar extends StaticPart {
  styles() {
    return `
      :host { display: flex; align-items: stretch; height: 50px; color: #fff; font-size: 15px; background: linear-gradient(90deg, #474742 0, #454540 30%, #494540 36%, #474743 52%, #454743 66%, #3d4937 74%, #2d3527 85%, #2d2b22 90%, #474746 93%, #333 100%); }
      button { display: flex; align-items: center; justify-content: center; }
      .sys { width: 60px; }
      .split { width: 5px; height: 26px; margin: 12px 12px 0 6px; border: 1px solid #73736f; border-width: 0 1px; }
      .app { width: 62px; }
      .open { background: linear-gradient(#76b9ed, #76b9ed) center bottom / 52px 3px no-repeat; }
      .current { background: linear-gradient(90deg, #706764 56px, #5b5350 56px); border-bottom: 3px solid #76b9ed; padding-top: 3px; }
      .tint { background: #4d413d; }
      .alert { background: #b56d35; border-bottom: 3px solid #ff7300; padding-top: 3px; }
      .stack { background: linear-gradient(90deg, #b56d35 56px, #a2602b 56px); }
      .tray { display: flex; align-items: center; margin-left: auto; }
      .tray > button { width: 39px; }
      .battery { position: relative; width: 61px; height: 26px; margin-right: 26px; border: 3px solid #fff; background: linear-gradient(90deg, #169b4a 45px, #000 45px); line-height: 20px; padding-left: 10px; font-size: 16px; }
      .battery::before { content: ""; position: absolute; right: -6px; top: 4px; width: 3px; height: 12px; background: #fff; }
      .clock { width: 86px; text-align: center; line-height: 23px; margin: 0 5px; }
      .note { position: relative; width: 64px; margin-right: 5px; height: 50px; border-right: 1px solid #6d6d6d; }
      .note button { width: 52px; height: 50px; }
      .note span { position: absolute; left: 26px; top: 24px; width: 20px; height: 20px; border: 1px solid #8a8a8a; border-radius: 50%; background: rgba(70, 70, 70, .85); text-align: center; line-height: 18px; font-size: 13px; }
      .tray .wide { width: 52px; }
      .tray .lang { width: 36px; }
    `;
  }
  markup() {
    const app = (t) => `<button class="app ${t.state || ""}" aria-label="${t.icon}"><ui-icon name="${t.icon}" size="${t.size || 28}"></ui-icon></button>`;
    return `
      <button class="sys" aria-label="Start"><ui-icon name="windows"></ui-icon></button>
      <button class="sys" aria-label="Search"><ui-icon name="search"></ui-icon></button>
      <button class="sys" aria-label="Task view"><ui-icon name="taskview"></ui-icon></button>
      <span class="split"></span>
      ${TASKS.map(app).join("")}
      <div class="tray">
        <div class="battery">76%</div>
        <button aria-label="Show hidden icons"><ui-icon name="up" size="16"></ui-icon></button>
        <button aria-label="Network"><ui-icon name="wifi" size="18"></ui-icon></button>
        <button aria-label="OneDrive"><ui-icon name="onedrive" size="20"></ui-icon></button>
        <button aria-label="Power"><ui-icon name="charge" size="20"></ui-icon></button>
        <button aria-label="Volume"><ui-icon name="mute" size="20"></ui-icon></button>
        <button class="wide" aria-label="Pen"><ui-icon name="pen"></ui-icon></button>
        <button class="lang">ENG</button>
        <div class="clock">8:07 AM<br>2/20/2020</div>
        <div class="note"><button aria-label="Notifications"><ui-icon name="notice"></ui-icon></button><span>1</span></div>
      </div>
    `;
  }
}
customElements.define("task-bar", TaskBar);
</script>
</body>
</html>
